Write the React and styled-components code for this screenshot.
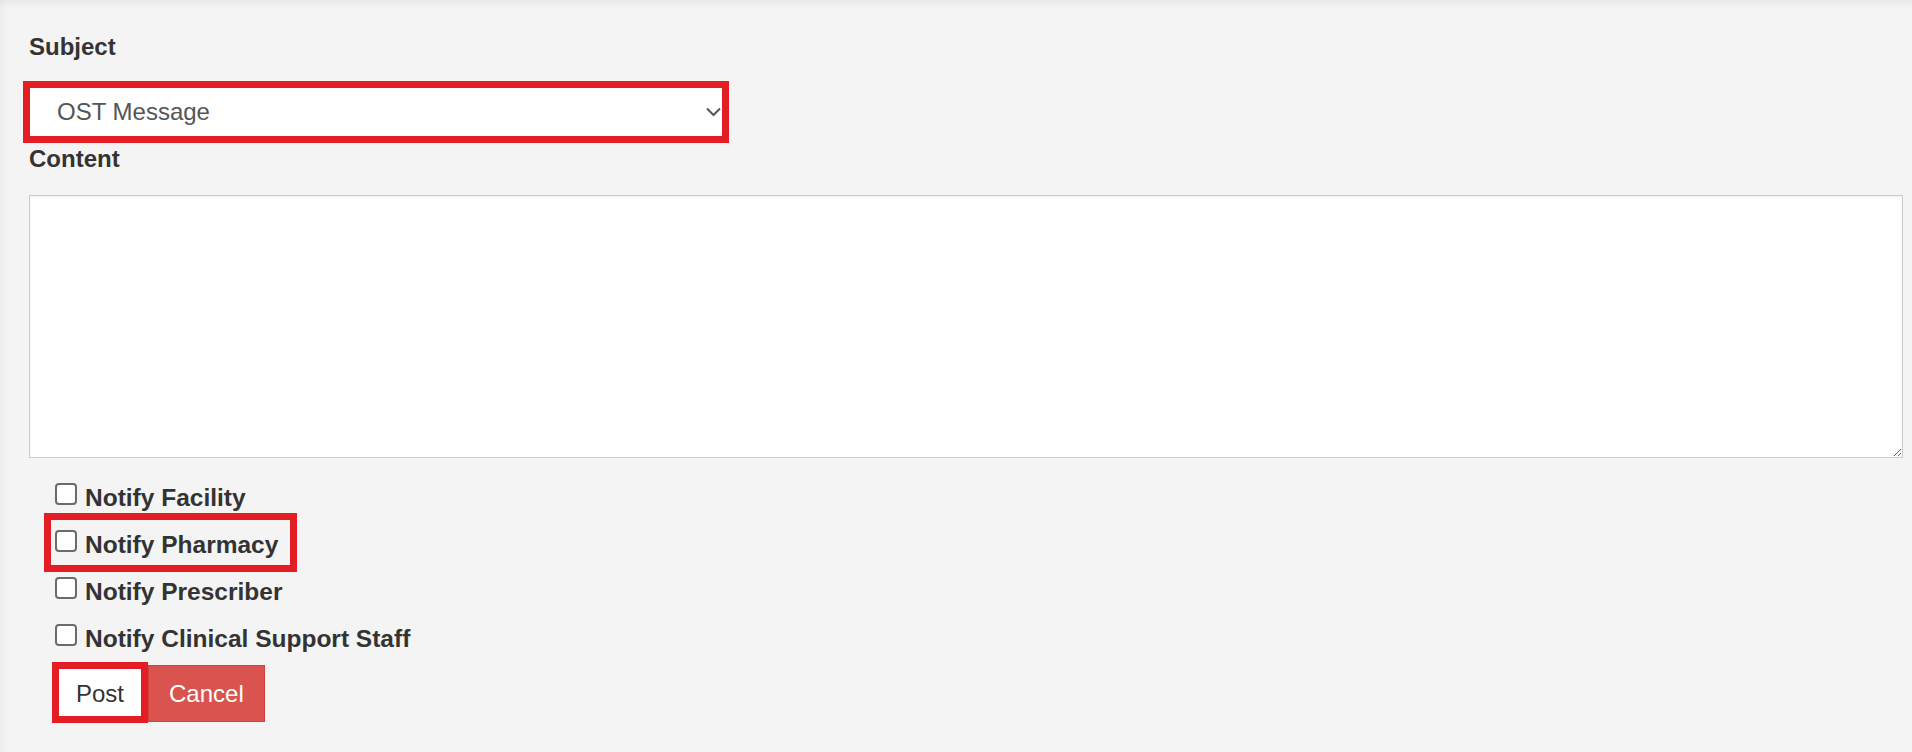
import React from 'react';
import styled, { createGlobalStyle } from 'styled-components';

const GlobalStyle = createGlobalStyle`
  html, body {
    margin: 0;
    padding: 0;
    background: #f4f4f4;
    font-family: "Liberation Sans", Arial, sans-serif;
  }
  * {
    box-sizing: border-box;
  }
`;

const Page = styled.div`
  min-height: 752px;
  padding: 30px 9px 0 29px;
  background: #f4f4f4;
  box-shadow: inset 0 10px 10px -8px rgba(0, 0, 0, 0.07),
    inset 10px 0 10px -8px rgba(0, 0, 0, 0.04);
`;

const FieldLabel = styled.label`
  display: block;
  margin-top: ${(p) => p.$gap || 0}px;
  font-size: 24px;
  line-height: 34px;
  font-weight: bold;
  color: #333;
`;

/* red box drawn over the marked parts of the form */
const Marked = styled.div`
  position: relative;
  display: ${(p) => (p.$inline ? 'inline-flex' : 'block')};

  &::after {
    content: '';
    position: absolute;
    top: ${(p) => p.$top}px;
    right: ${(p) => p.$right}px;
    bottom: ${(p) => p.$bottom}px;
    left: ${(p) => p.$left}px;
    border: 7px solid #e41d25;
    pointer-events: none;
  }
`;

const SelectWrap = styled(Marked)`
  width: 694px;
  height: 51px;
  margin-top: 22px;
`;

const Select = styled.select`
  width: 100%;
  height: 100%;
  appearance: none;
  border: 1px solid #ccc;
  border-radius: 0;
  background: #fff;
  padding: 0 0 0 27px;
  font-family: inherit;
  font-size: 24px;
  color: #555;
  outline: none;
`;

const Chevron = styled.svg`
  position: absolute;
  right: 2px;
  top: 50%;
  transform: translateY(-50%);
  pointer-events: none;
`;

const ContentBox = styled.textarea`
  display: block;
  width: 100%;
  height: 263px;
  margin-top: 19px;
  border: 1px solid #ccc;
  border-radius: 0;
  background: #fff;
  box-shadow: inset 0 1px 2px rgba(0, 0, 0, 0.075);
  font-family: inherit;
  font-size: 24px;
  outline: none;
`;

const CheckList = styled.div`
  display: flex;
  flex-direction: column;
  align-items: flex-start;
  gap: 13px;
  margin-top: 23px;
  padding-left: 26px;
`;

const CheckRow = styled.label`
  display: inline-flex;
  align-items: flex-start;
  gap: 8px;
  font-size: 24.5px;
  line-height: 34px;
  font-weight: bold;
  color: #333;
`;

const Box = styled.input`
  appearance: none;
  width: 22px;
  height: 22px;
  margin: 2px 0 0 0;
  border: 2px solid #6b6b6b;
  border-radius: 4px;
  background: #fff;
`;

const ButtonRow = styled.div`
  display: flex;
  gap: 6px;
  margin-top: 9px;
  padding-left: 29px;
`;

const Button = styled.button`
  font-family: inherit;
  font-size: 24px;
  line-height: 37px;
  padding: 9px ${(p) => (p.$danger ? 20 : 17)}px;
  border: 1px solid ${(p) => (p.$danger ? '#d43f3a' : '#ccc')};
  border-radius: 0;
  background: ${(p) => (p.$danger ? '#d9534f' : '#fff')};
  color: ${(p) => (p.$danger ? '#fff' : '#333')};
`;

const notifyOptions = [
  { id: 'facility', label: 'Notify Facility' },
  { id: 'pharmacy', label: 'Notify Pharmacy', marked: true },
  { id: 'prescriber', label: 'Notify Prescriber' },
  { id: 'clinical', label: 'Notify Clinical Support Staff' },
];

const NotifyOption = ({ option }) => {
  const row = (
    <CheckRow>
      <Box type="checkbox" />
      {option.label}
    </CheckRow>
  );
  if (!option.marked) return row;
  return (
    <Marked $inline $top={-15} $right={-19} $bottom={-10} $left={-11}>
      {row}
    </Marked>
  );
};

const App = () => {
  return (
    <Page>
      <GlobalStyle />
      <FieldLabel>Subject</FieldLabel>
      <SelectWrap $top={-5} $right={-6} $bottom={-6} $left={-6}>
        <Select defaultValue="ost">
          <option value="ost">OST Message</option>
        </Select>
        <Chevron width="15" height="9" viewBox="0 0 15 9">
          <path d="M1 1l6.5 6.5L14 1" fill="none" stroke="#555" strokeWidth="2" />
        </Chevron>
      </SelectWrap>

      <FieldLabel $gap={5}>Content</FieldLabel>
      <ContentBox />

      <CheckList>
        {notifyOptions.map((option) => (
          <NotifyOption option={option} key={option.id} />
        ))}
      </CheckList>

      <ButtonRow>
        <Marked $inline $top={-3} $right={-6} $bottom={-1} $left={-6}>
          <Button>Post</Button>
        </Marked>
        <Button $danger>Cancel</Button>
      </ButtonRow>
    </Page>
  );
};

export default App;
